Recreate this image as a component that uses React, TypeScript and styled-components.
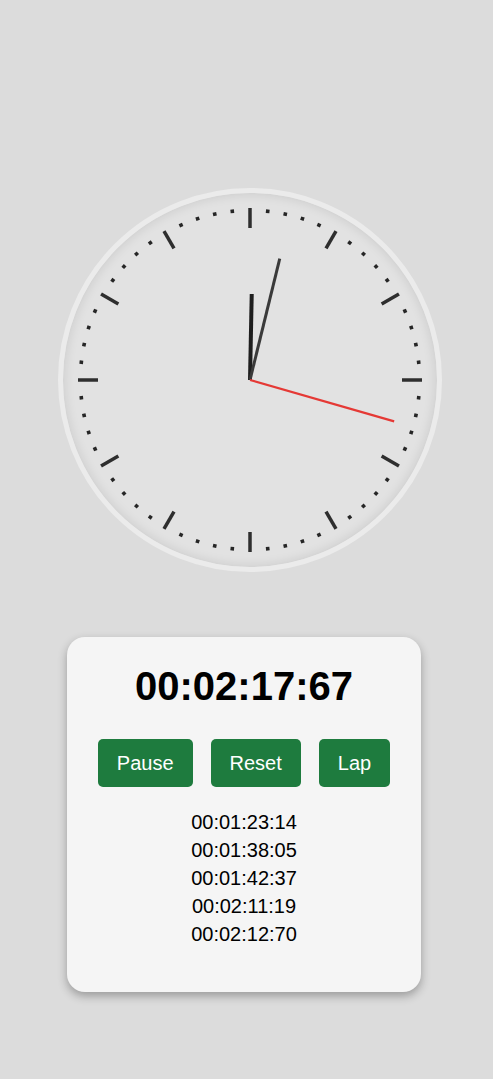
import styled, { createGlobalStyle } from "styled-components";

const GlobalStyle = createGlobalStyle`
  html, body {
    margin: 0;
    padding: 0;
    background: #dcdcdc;
    font-family: "Liberation Sans", Arial, sans-serif;
  }
`;

const CLOCK = 384;
const R = 187; // inner radius in svg coords
const elapsed = { min: 2, sec: 17, cs: 67 };
const laps = ["00:01:23:14", "00:01:38:05", "00:01:42:37", "00:02:11:19", "00:02:12:70"];

const secFloat = elapsed.sec + elapsed.cs / 100;
const minFloat = elapsed.min + secFloat / 60;
const secAngle = secFloat * 6;
const minAngle = minFloat * 6;
const hourAngle = minFloat * 0.5;

const polar = (angle: number, r: number) => {
  const rad = ((angle - 90) * Math.PI) / 180;
  return { x: R + r * Math.cos(rad), y: R + r * Math.sin(rad) };
};

const Hand = ({ angle, length, width, color }: { angle: number; length: number; width: number; color: string }) => {
  const end = polar(angle, length);
  return <line x1={R} y1={R} x2={end.x} y2={end.y} stroke={color} strokeWidth={width} strokeLinecap="butt" />;
};

const ClockFace = () => {
  const marks = [];
  for (let i = 0; i < 60; i++) {
    const angle = i * 6;
    if (i % 5 === 0) {
      const a = polar(angle, 152);
      const b = polar(angle, 172);
      marks.push(<line key={i} x1={a.x} y1={a.y} x2={b.x} y2={b.y} stroke="#2e2e2e" strokeWidth={3.5} />);
    } else {
      const a = polar(angle, 167.8);
      const b = polar(angle, 171.4);
      marks.push(<line key={i} x1={a.x} y1={a.y} x2={b.x} y2={b.y} stroke="#262626" strokeWidth={3.6} />);
    }
  }
  return (
    <svg width={R * 2} height={R * 2} viewBox={`0 0 ${R * 2} ${R * 2}`}>
      {marks}
      <Hand angle={hourAngle} length={86} width={4} color="#1e1e1e" />
      <Hand angle={minAngle} length={125} width={3} color="#3a3a3a" />
      <Hand angle={secAngle} length={150} width={2.2} color="#e53935" />
    </svg>
  );
};

const App = () => {
  return (
    <>
      <GlobalStyle />
      <Page>
        <Clock>
          <ClockFace />
        </Clock>
        <Card>
          <Display>00:02:17:67</Display>
          <Controls>
            <Button>Pause</Button>
            <Button>Reset</Button>
            <Button>Lap</Button>
          </Controls>
          <LapList>
            {laps.map((l) => (
              <LapItem key={l}>{l}</LapItem>
            ))}
          </LapList>
        </Card>
      </Page>
    </>
  );
};

const Page = styled.div`
  display: flex;
  flex-direction: column;
  align-items: center;
  min-height: 1079px;
  padding-top: 188px;
  box-sizing: border-box;
`;

const Clock = styled.div`
  width: ${CLOCK}px;
  height: ${CLOCK}px;
  box-sizing: border-box;
  margin-left: 7px;
  border: 5px solid #ebebeb;
  border-radius: 50%;
  background: #e2e2e2;
  box-shadow: inset 0 0 12px rgba(0, 0, 0, 0.12);
  display: flex;
  align-items: center;
  justify-content: center;

  svg {
    display: block;
  }
`;

const Card = styled.div`
  width: 354px;
  height: 355px;
  box-sizing: border-box;
  margin-top: 65px;
  margin-right: 5px;
  padding: 26px 0 0;
  background: #f5f5f5;
  border-radius: 18px;
  box-shadow: 0 4px 10px rgba(0, 0, 0, 0.3);
  display: flex;
  flex-direction: column;
  align-items: center;
`;

const Display = styled.div`
  font-size: 40px;
  font-weight: 700;
  color: #000;
  line-height: 46px;
`;

const Controls = styled.div`
  display: flex;
  gap: 18px;
  margin-top: 30px;
`;

const Button = styled.button`
  font-family: "Liberation Sans", Arial, sans-serif;
  font-size: 20px;
  line-height: 22px;
  padding: 13px 19px;
  border: none;
  border-radius: 5px;
  background: #1e7b3e;
  color: #fff;
  cursor: pointer;
`;

const LapList = styled.ul`
  list-style: none;
  margin: 21px 0 0;
  padding: 0;
  text-align: center;
`;

const LapItem = styled.li`
  font-size: 20px;
  line-height: 28px;
  color: #000;
`;

export default App;
